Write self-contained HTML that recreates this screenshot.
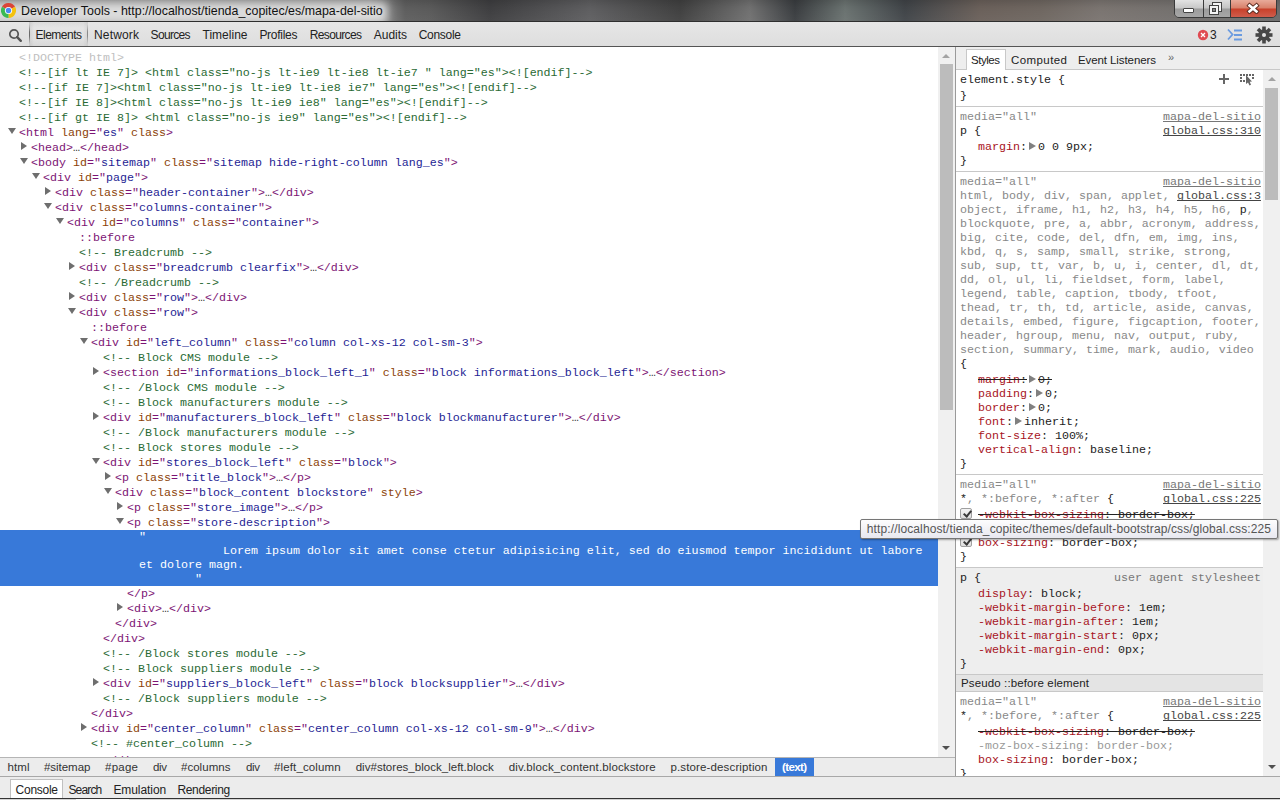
<!DOCTYPE html>
<html><head><meta charset="utf-8"><style>
*{margin:0;padding:0;box-sizing:border-box}
html,body{width:1280px;height:800px;overflow:hidden;background:#fff}
body{position:relative;font-family:"Liberation Sans",sans-serif;font-size:12px;color:#222}
.abs{position:absolute}
.ln{position:absolute;white-space:pre;font-family:"Liberation Mono",monospace;font-size:11.67px;line-height:15px;height:15px}
i.ad{position:absolute;width:0;height:0;border-left:4px solid transparent;border-right:4px solid transparent;border-top:6px solid #6e6e6e}
i.ar{position:absolute;width:0;height:0;border-top:4px solid transparent;border-bottom:4px solid transparent;border-left:6px solid #6e6e6e}
.sl{position:absolute;white-space:pre;font-family:"Liberation Mono",monospace;font-size:11.67px;line-height:14px;height:14px}
.ui{position:absolute;white-space:pre;font-family:"Liberation Sans",sans-serif;font-size:12px;line-height:14px;height:14px}
.tri{display:inline-block;width:0;height:0;border-top:4px solid transparent;border-bottom:4px solid transparent;border-left:7px solid #808080;margin:0 2px 0 2px;vertical-align:0px}
i.cb{position:absolute;width:12px;height:11px;border:1px solid #a0a0a0;border-radius:2px;background:linear-gradient(#f4f4f4,#dedede)}
i.cb:after{content:"";position:absolute;left:4px;top:0px;width:3px;height:6px;border:solid #3a3a3a;border-width:0 2px 2px 0;transform:rotate(40deg)}
</style></head><body>
<!-- title bar -->
<div class="abs" style="left:0;top:0;width:1280px;height:21px;background:linear-gradient(90deg,#9a9a9a 0px,#9a9a9a 370px,#5e5e5e 405px,#5a5a5a 430px,#3e3e40 490px,#5e5e60 590px,#404040 680px,#707070 750px,#3a3d40 795px,#6a7270 845px,#404448 905px,#6a605a 980px,#6e6660 1040px,#7a7470 1100px,#6a6a6a 1280px)"></div><div class="abs" style="left:0;top:0;width:1280px;height:21px;background:linear-gradient(rgba(0,0,0,.12),rgba(0,0,0,0) 8px,rgba(255,255,255,.04) 20px)"></div>
<div class="abs" style="left:0;top:21px;width:1280px;height:1px;background:#3a3a3a"></div>
<div class="abs" style="left:-10px;top:3px;width:397px;height:20px;background:#dcdcdc;filter:blur(4px)"></div><div class="abs" style="left:0;top:21px;width:1280px;height:1px;background:#2e2e2e"></div>
<svg class="abs" style="left:1px;top:3px" width="15" height="15" viewBox="-7.5 -7.5 15 15"><path d="M0 0 L-6.5 -3.75 A7.5 7.5 0 0 1 6.5 -3.75 Z" fill="#db4437"/><path d="M0 0 L6.5 -3.75 A7.5 7.5 0 0 1 0 7.5 Z" fill="#f4c20d"/><path d="M0 0 L0 7.5 A7.5 7.5 0 0 1 -6.5 -3.75 Z" fill="#3cba54"/><circle r="3.6" fill="#fff"/><circle r="2.7" fill="#4a8af4"/></svg>
<!-- window buttons -->
<div class="abs" style="left:1174px;top:-2px;width:103px;height:20px;border:1px solid #3a3a3a;border-radius:0 0 5px 5px;overflow:hidden">
 <div class="abs" style="left:0;top:0;width:28px;height:19px;background:linear-gradient(#e6e6e6 0,#c8c8c8 9px,#9c9c9c 10px,#a8a8a8 19px)"></div>
 <div class="abs" style="left:28px;top:0;width:1px;height:19px;background:#3a3a3a"></div>
 <div class="abs" style="left:29px;top:0;width:26px;height:19px;background:linear-gradient(#e0e0e0 0,#c4c4c4 9px,#9c9c9c 10px,#a8a8a8 19px)"></div>
 <div class="abs" style="left:55px;top:0;width:1px;height:19px;background:#3a3a3a"></div>
 <div class="abs" style="left:56px;top:0;width:47px;height:19px;background:linear-gradient(#eab0a0 0,#d8806a 9px,#c8402a 10px,#d06050 19px)"></div>
</div>
<div class="abs" style="left:1183px;top:8px;width:11px;height:5px;background:#fff;border:1px solid #444;border-radius:1px"></div>
<div class="abs" style="left:1212px;top:2px;width:10px;height:10px;border:1px solid #444;background:#f4f4f4"></div>
<div class="abs" style="left:1209px;top:5px;width:10px;height:10px;border:1px solid #444;background:#f4f4f4"></div>
<div class="abs" style="left:1212px;top:8px;width:4px;height:4px;border:1px solid #444;background:#888"></div>
<svg class="abs" style="left:1245px;top:2px" width="16" height="12" viewBox="0 0 16 12"><path d="M4.5 3.5 L11.5 9.5 M11.5 3.5 L4.5 9.5" stroke="#5a2a20" stroke-width="4.4" stroke-linecap="square"/><path d="M4.5 3.5 L11.5 9.5 M11.5 3.5 L4.5 9.5" stroke="#fff" stroke-width="2.6" stroke-linecap="square"/></svg>
<!-- toolbar -->
<div class="abs" style="left:0;top:22px;width:1280px;height:24px;background:linear-gradient(#e6e6e6,#dedede)"></div>
<div class="abs" style="left:29px;top:22px;width:59px;height:24px;background:linear-gradient(90deg,rgba(0,0,0,.08) 0,rgba(0,0,0,0) 5px,rgba(0,0,0,0) 54px,rgba(0,0,0,.06) 59px),linear-gradient(rgba(0,0,0,.05),rgba(0,0,0,0) 6px,rgba(0,0,0,0) 18px,rgba(0,0,0,.03))"></div>
<div class="abs" style="left:29px;top:24px;width:1px;height:20px;background:linear-gradient(rgba(90,90,90,0),#6a6a6a 40%,#6a6a6a 60%,rgba(90,90,90,0))"></div>
<div class="abs" style="left:87px;top:24px;width:1px;height:20px;background:linear-gradient(rgba(90,90,90,0),#8a8a8a 40%,#8a8a8a 60%,rgba(90,90,90,0))"></div>
<div class="abs" style="left:0;top:46px;width:1280px;height:1px;background:#555"></div>
<svg class="abs" style="left:8px;top:28px" width="16" height="15" viewBox="0 0 16 15"><circle cx="6" cy="6" r="4.2" fill="none" stroke="#555" stroke-width="1.7"/><path d="M9.2 9.2 L12.8 12.8" stroke="#555" stroke-width="2.4" stroke-linecap="round"/></svg>
<svg class="abs" style="left:1196px;top:28px" width="14" height="14" viewBox="0 0 14 14"><circle cx="7" cy="7" r="5.2" fill="#e04a52"/><path d="M5 5 L9 9 M9 5 L5 9" stroke="#fff" stroke-width="1.3"/></svg>
<svg class="abs" style="left:1226px;top:28px" width="18" height="14" viewBox="0 0 18 14"><path d="M2 1.5 L6.5 6.5 L2 11.5" fill="none" stroke="#6a9be0" stroke-width="1.8"/><rect x="8" y="1.5" width="8" height="2" fill="#6a9be0"/><rect x="8" y="6" width="8" height="2" fill="#6a9be0"/><rect x="8" y="10.5" width="8" height="2" fill="#6a9be0"/></svg>
<svg class="abs" style="left:1255px;top:26px" width="18" height="18" viewBox="0 0 18 18"><g fill="#474747" transform="translate(9 9)"><circle r="5.8"/><rect x="-1.8" y="-8.5" width="3.6" height="17"/><rect x="-1.8" y="-8.5" width="3.6" height="17" transform="rotate(45)"/><rect x="-1.8" y="-8.5" width="3.6" height="17" transform="rotate(90)"/><rect x="-1.8" y="-8.5" width="3.6" height="17" transform="rotate(135)"/></g><circle cx="9" cy="9" r="2" fill="#e4e4e4"/></svg>
<!-- elements tree -->
<div class="ln" style="left:19px;top:51px"><span style="color:#c0c0c0">&lt;!DOCTYPE html&gt;</span></div>
<div class="ln" style="left:19px;top:66px"><span style="color:#2a6a34">&lt;!--[if lt IE 7]&gt; &lt;html class="no-js lt-ie9 lt-ie8 lt-ie7 " lang="es"&gt;&lt;![endif]--&gt;</span></div>
<div class="ln" style="left:19px;top:81px"><span style="color:#2a6a34">&lt;!--[if IE 7]&gt;&lt;html class="no-js lt-ie9 lt-ie8 ie7" lang="es"&gt;&lt;![endif]--&gt;</span></div>
<div class="ln" style="left:19px;top:96px"><span style="color:#2a6a34">&lt;!--[if IE 8]&gt;&lt;html class="no-js lt-ie9 ie8" lang="es"&gt;&lt;![endif]--&gt;</span></div>
<div class="ln" style="left:19px;top:111px"><span style="color:#2a6a34">&lt;!--[if gt IE 8]&gt; &lt;html class="no-js ie9" lang="es"&gt;&lt;![endif]--&gt;</span></div>
<i class="ad" style="left:8px;top:128px"></i><div class="ln" style="left:19px;top:126px"><span style="color:#7c1474">&lt;html <span style="color:#8c4208">lang</span>="<span style="color:#1e1e94">es</span>" <span style="color:#8c4208">class</span>&gt;</span></div>
<i class="ar" style="left:21px;top:142px"></i><div class="ln" style="left:31px;top:141px"><span style="color:#7c1474">&lt;head&gt;</span><span style="color:#333">…</span><span style="color:#7c1474">&lt;/head&gt;</span></div>
<i class="ad" style="left:20px;top:158px"></i><div class="ln" style="left:31px;top:156px"><span style="color:#7c1474">&lt;body <span style="color:#8c4208">id</span>="<span style="color:#1e1e94">sitemap</span>" <span style="color:#8c4208">class</span>="<span style="color:#1e1e94">sitemap hide-right-column lang_es</span>"&gt;</span></div>
<i class="ad" style="left:32px;top:173px"></i><div class="ln" style="left:43px;top:171px"><span style="color:#7c1474">&lt;div <span style="color:#8c4208">id</span>="<span style="color:#1e1e94">page</span>"&gt;</span></div>
<i class="ar" style="left:45px;top:187px"></i><div class="ln" style="left:55px;top:186px"><span style="color:#7c1474">&lt;div <span style="color:#8c4208">class</span>="<span style="color:#1e1e94">header-container</span>"&gt;</span><span style="color:#333">…</span><span style="color:#7c1474">&lt;/div&gt;</span></div>
<i class="ad" style="left:44px;top:203px"></i><div class="ln" style="left:55px;top:201px"><span style="color:#7c1474">&lt;div <span style="color:#8c4208">class</span>="<span style="color:#1e1e94">columns-container</span>"&gt;</span></div>
<i class="ad" style="left:56px;top:218px"></i><div class="ln" style="left:67px;top:216px"><span style="color:#7c1474">&lt;div <span style="color:#8c4208">id</span>="<span style="color:#1e1e94">columns</span>" <span style="color:#8c4208">class</span>="<span style="color:#1e1e94">container</span>"&gt;</span></div>
<div class="ln" style="left:79px;top:231px"><span style="color:#7c1474">::before</span></div>
<div class="ln" style="left:79px;top:246px"><span style="color:#2a6a34">&lt;!-- Breadcrumb --&gt;</span></div>
<i class="ar" style="left:69px;top:262px"></i><div class="ln" style="left:79px;top:261px"><span style="color:#7c1474">&lt;div <span style="color:#8c4208">class</span>="<span style="color:#1e1e94">breadcrumb clearfix</span>"&gt;</span><span style="color:#333">…</span><span style="color:#7c1474">&lt;/div&gt;</span></div>
<div class="ln" style="left:79px;top:276px"><span style="color:#2a6a34">&lt;!-- /Breadcrumb --&gt;</span></div>
<i class="ar" style="left:69px;top:292px"></i><div class="ln" style="left:79px;top:291px"><span style="color:#7c1474">&lt;div <span style="color:#8c4208">class</span>="<span style="color:#1e1e94">row</span>"&gt;</span><span style="color:#333">…</span><span style="color:#7c1474">&lt;/div&gt;</span></div>
<i class="ad" style="left:68px;top:308px"></i><div class="ln" style="left:79px;top:306px"><span style="color:#7c1474">&lt;div <span style="color:#8c4208">class</span>="<span style="color:#1e1e94">row</span>"&gt;</span></div>
<div class="ln" style="left:91px;top:321px"><span style="color:#7c1474">::before</span></div>
<i class="ad" style="left:80px;top:338px"></i><div class="ln" style="left:91px;top:336px"><span style="color:#7c1474">&lt;div <span style="color:#8c4208">id</span>="<span style="color:#1e1e94">left_column</span>" <span style="color:#8c4208">class</span>="<span style="color:#1e1e94">column col-xs-12 col-sm-3</span>"&gt;</span></div>
<div class="ln" style="left:103px;top:351px"><span style="color:#2a6a34">&lt;!-- Block CMS module --&gt;</span></div>
<i class="ar" style="left:93px;top:367px"></i><div class="ln" style="left:103px;top:366px"><span style="color:#7c1474">&lt;section <span style="color:#8c4208">id</span>="<span style="color:#1e1e94">informations_block_left_1</span>" <span style="color:#8c4208">class</span>="<span style="color:#1e1e94">block informations_block_left</span>"&gt;</span><span style="color:#333">…</span><span style="color:#7c1474">&lt;/section&gt;</span></div>
<div class="ln" style="left:103px;top:381px"><span style="color:#2a6a34">&lt;!-- /Block CMS module --&gt;</span></div>
<div class="ln" style="left:103px;top:396px"><span style="color:#2a6a34">&lt;!-- Block manufacturers module --&gt;</span></div>
<i class="ar" style="left:93px;top:412px"></i><div class="ln" style="left:103px;top:411px"><span style="color:#7c1474">&lt;div <span style="color:#8c4208">id</span>="<span style="color:#1e1e94">manufacturers_block_left</span>" <span style="color:#8c4208">class</span>="<span style="color:#1e1e94">block blockmanufacturer</span>"&gt;</span><span style="color:#333">…</span><span style="color:#7c1474">&lt;/div&gt;</span></div>
<div class="ln" style="left:103px;top:426px"><span style="color:#2a6a34">&lt;!-- /Block manufacturers module --&gt;</span></div>
<div class="ln" style="left:103px;top:441px"><span style="color:#2a6a34">&lt;!-- Block stores module --&gt;</span></div>
<i class="ad" style="left:92px;top:458px"></i><div class="ln" style="left:103px;top:456px"><span style="color:#7c1474">&lt;div <span style="color:#8c4208">id</span>="<span style="color:#1e1e94">stores_block_left</span>" <span style="color:#8c4208">class</span>="<span style="color:#1e1e94">block</span>"&gt;</span></div>
<i class="ar" style="left:105px;top:472px"></i><div class="ln" style="left:115px;top:471px"><span style="color:#7c1474">&lt;p <span style="color:#8c4208">class</span>="<span style="color:#1e1e94">title_block</span>"&gt;</span><span style="color:#333">…</span><span style="color:#7c1474">&lt;/p&gt;</span></div>
<i class="ad" style="left:104px;top:488px"></i><div class="ln" style="left:115px;top:486px"><span style="color:#7c1474">&lt;div <span style="color:#8c4208">class</span>="<span style="color:#1e1e94">block_content blockstore</span>" <span style="color:#8c4208">style</span>&gt;</span></div>
<i class="ar" style="left:117px;top:502px"></i><div class="ln" style="left:127px;top:501px"><span style="color:#7c1474">&lt;p <span style="color:#8c4208">class</span>="<span style="color:#1e1e94">store_image</span>"&gt;</span><span style="color:#333">…</span><span style="color:#7c1474">&lt;/p&gt;</span></div>
<i class="ad" style="left:116px;top:518px"></i><div class="ln" style="left:127px;top:516px"><span style="color:#7c1474">&lt;p <span style="color:#8c4208">class</span>="<span style="color:#1e1e94">store-description</span>"&gt;</span></div>
<div class="ln" style="left:127px;top:587px"><span style="color:#7c1474">&lt;/p&gt;</span></div>
<i class="ar" style="left:117px;top:603px"></i><div class="ln" style="left:127px;top:602px"><span style="color:#7c1474">&lt;div&gt;</span><span style="color:#333">…</span><span style="color:#7c1474">&lt;/div&gt;</span></div>
<div class="ln" style="left:115px;top:617px"><span style="color:#7c1474">&lt;/div&gt;</span></div>
<div class="ln" style="left:103px;top:632px"><span style="color:#7c1474">&lt;/div&gt;</span></div>
<div class="ln" style="left:103px;top:647px"><span style="color:#2a6a34">&lt;!-- /Block stores module --&gt;</span></div>
<div class="ln" style="left:103px;top:662px"><span style="color:#2a6a34">&lt;!-- Block suppliers module --&gt;</span></div>
<i class="ar" style="left:93px;top:678px"></i><div class="ln" style="left:103px;top:677px"><span style="color:#7c1474">&lt;div <span style="color:#8c4208">id</span>="<span style="color:#1e1e94">suppliers_block_left</span>" <span style="color:#8c4208">class</span>="<span style="color:#1e1e94">block blocksupplier</span>"&gt;</span><span style="color:#333">…</span><span style="color:#7c1474">&lt;/div&gt;</span></div>
<div class="ln" style="left:103px;top:692px"><span style="color:#2a6a34">&lt;!-- /Block suppliers module --&gt;</span></div>
<div class="ln" style="left:91px;top:707px"><span style="color:#7c1474">&lt;/div&gt;</span></div>
<i class="ar" style="left:81px;top:723px"></i><div class="ln" style="left:91px;top:722px"><span style="color:#7c1474">&lt;div <span style="color:#8c4208">id</span>="<span style="color:#1e1e94">center_column</span>" <span style="color:#8c4208">class</span>="<span style="color:#1e1e94">center_column col-xs-12 col-sm-9</span>"&gt;</span><span style="color:#333">…</span><span style="color:#7c1474">&lt;/div&gt;</span></div>
<div class="ln" style="left:91px;top:737px"><span style="color:#2a6a34">&lt;!-- #center_column --&gt;</span></div>
<div class="abs" style="left:0;top:755px;width:938px;height:2px;overflow:hidden"><div class="ln" style="left:103px;top:-1px;color:#881280">&lt;/div&gt;</div></div>
<div class="abs" style="left:0;top:530px;width:938px;height:56px;background:#3879d9"></div>
<div class="ln" style="left:139px;top:530px;color:#fff;line-height:14px;height:14px">"</div>
<div class="ln" style="left:139px;top:544px;color:#fff;line-height:14px;height:14px">            Lorem ipsum dolor sit amet conse ctetur adipisicing elit, sed do eiusmod tempor incididunt ut labore</div>
<div class="ln" style="left:139px;top:558px;color:#fff;line-height:14px;height:14px">et dolore magn.</div>
<div class="ln" style="left:139px;top:572px;color:#fff;line-height:14px;height:14px">        "</div>
<!-- elements scrollbar -->
<div class="abs" style="left:938px;top:47px;width:17px;height:710px;background:#f0f0f0"></div>
<div class="abs" style="left:940px;top:64px;width:13px;height:346px;background:#bcbcbc"></div>
<i class="abs" style="left:942px;top:54px;width:0;height:0;border-left:4px solid transparent;border-right:4px solid transparent;border-bottom:4px solid #a3a3a3"></i>
<i class="abs" style="left:942px;top:746px;width:0;height:0;border-left:4px solid transparent;border-right:4px solid transparent;border-top:4px solid #505050"></i>
<!-- breadcrumb bar -->
<div class="abs" style="left:0;top:757px;width:955px;height:19px;background:#ececec;border-top:1px solid #b5b5b5"></div>
<div class="abs" style="left:775px;top:758px;width:39px;height:18px;background:#3879d9"></div>
<!-- sidebar -->
<div class="abs" style="left:955px;top:47px;width:1px;height:729px;background:#9a9a9a"></div>
<div class="abs" style="left:956px;top:47px;width:324px;height:23px;background:#eeeeee;border-bottom:1px solid #c8c8c8"></div>
<div class="abs" style="left:966px;top:49px;width:40px;height:21px;background:#fff;border:1px solid #c8c8c8;border-bottom:none"></div>
<div class="abs" style="left:1168px;top:51px;font:11px 'Liberation Sans';color:#666">&#187;</div>
<div class="abs" style="left:956px;top:106px;width:307px;height:1px;background:#c8c8c8"></div>
<div class="abs" style="left:956px;top:171px;width:307px;height:1px;background:#c8c8c8"></div>
<div class="abs" style="left:956px;top:474px;width:307px;height:1px;background:#c8c8c8"></div>
<div class="abs" style="left:956px;top:567px;width:307px;height:107px;background:#eeeeee;border-top:1px solid #c8c8c8"></div>
<div class="abs" style="left:956px;top:674px;width:307px;height:18px;background:#e4e4e4;border-top:1px solid #c8c8c8;border-bottom:1px solid #c8c8c8"></div>
<!-- sidebar icons -->
<div class="abs" style="left:1219px;top:78px;width:10px;height:2px;background:#666"></div>
<div class="abs" style="left:1223px;top:74px;width:2px;height:10px;background:#666"></div>
<svg class="abs" style="left:1240px;top:74px" width="14" height="12" viewBox="0 0 14 12"><g fill="#666"><rect x="0" y="0" width="2" height="2"/><rect x="3" y="0" width="2" height="2"/><rect x="6" y="0" width="2" height="2"/><rect x="9" y="0" width="2" height="2"/><rect x="12" y="0" width="2" height="2"/><rect x="0" y="3" width="2" height="2"/><rect x="12" y="3" width="2" height="2"/><rect x="0" y="6" width="2" height="2"/><rect x="3" y="6" width="2" height="2"/><path d="M6 1 L6 10 L8 8.5 L9.5 11.5 L11 10.8 L9.7 7.8 L12 7.5 Z"/></g></svg>
<div class="sl" style="left:960px;top:73px;"><span style="color:#222;">element.style {</span></div>
<div class="sl" style="left:960px;top:89px;"><span style="color:#222;">}</span></div>
<div class="sl" style="left:960px;top:110px;"><span style="color:#888;">media="all"</span></div>
<div class="sl" style="left:1163px;top:110px;color:#777;text-decoration:underline;text-decoration-skip-ink:none">mapa-del-sitio</div>
<div class="sl" style="left:960px;top:124px;"><span style="color:#222;">p {</span></div>
<div class="sl" style="left:1163px;top:124px;color:#444;text-decoration:underline;text-decoration-skip-ink:none">global.css:310</div>
<div class="sl" style="left:978px;top:140px;"><span style="color:#a8141e;">margin</span><span style="color:#222;">:</span><span class="tri"></span><span style="color:#222;">0 0 9px;</span></div>
<div class="sl" style="left:960px;top:154px;"><span style="color:#222;">}</span></div>
<div class="sl" style="left:960px;top:175px;"><span style="color:#888;">media="all"</span></div>
<div class="sl" style="left:1163px;top:175px;color:#777;text-decoration:underline;text-decoration-skip-ink:none">mapa-del-sitio</div>
<div class="sl" style="left:960px;top:189px;"><span style="color:#888;">html, body, div, span, applet, </span></div>
<div class="sl" style="left:960px;top:203px;"><span style="color:#888;">object, iframe, h1, h2, h3, h4, h5, h6, </span><span style="color:#222;">p</span><span style="color:#888;">,</span></div>
<div class="sl" style="left:960px;top:217px;"><span style="color:#888;">blockquote, pre, a, abbr, acronym, address,</span></div>
<div class="sl" style="left:960px;top:231px;"><span style="color:#888;">big, cite, code, del, dfn, em, img, ins,</span></div>
<div class="sl" style="left:960px;top:245px;"><span style="color:#888;">kbd, q, s, samp, small, strike, strong,</span></div>
<div class="sl" style="left:960px;top:259px;"><span style="color:#888;">sub, sup, tt, var, b, u, i, center, dl, dt,</span></div>
<div class="sl" style="left:960px;top:273px;"><span style="color:#888;">dd, ol, ul, li, fieldset, form, label,</span></div>
<div class="sl" style="left:960px;top:287px;"><span style="color:#888;">legend, table, caption, tbody, tfoot,</span></div>
<div class="sl" style="left:960px;top:301px;"><span style="color:#888;">thead, tr, th, td, article, aside, canvas,</span></div>
<div class="sl" style="left:960px;top:315px;"><span style="color:#888;">details, embed, figure, figcaption, footer,</span></div>
<div class="sl" style="left:960px;top:329px;"><span style="color:#888;">header, hgroup, menu, nav, output, ruby,</span></div>
<div class="sl" style="left:960px;top:343px;"><span style="color:#888;">section, summary, time, mark, audio, video</span></div>
<div class="sl" style="left:960px;top:357px;"><span style="color:#222;">{</span></div>
<div class="sl" style="left:1177px;top:189px;color:#444;text-decoration:underline;text-decoration-skip-ink:none">global.css:3</div>
<div class="sl" style="left:978px;top:373px;text-decoration:line-through;text-decoration-color:#222;"><span style="color:#a8141e;">margin</span><span style="color:#222;">:</span><span class="tri"></span><span style="color:#222;">0;</span></div>
<div class="sl" style="left:978px;top:387px;"><span style="color:#a8141e;">padding</span><span style="color:#222;">:</span><span class="tri"></span><span style="color:#222;">0;</span></div>
<div class="sl" style="left:978px;top:401px;"><span style="color:#a8141e;">border</span><span style="color:#222;">:</span><span class="tri"></span><span style="color:#222;">0;</span></div>
<div class="sl" style="left:978px;top:415px;"><span style="color:#a8141e;">font</span><span style="color:#222;">:</span><span class="tri"></span><span style="color:#222;">inherit;</span></div>
<div class="sl" style="left:978px;top:429px;"><span style="color:#a8141e;">font-size</span><span style="color:#222;">: </span><span style="color:#222;">100%;</span></div>
<div class="sl" style="left:978px;top:443px;"><span style="color:#a8141e;">vertical-align</span><span style="color:#222;">: </span><span style="color:#222;">baseline;</span></div>
<div class="sl" style="left:960px;top:457px;"><span style="color:#222;">}</span></div>
<div class="sl" style="left:960px;top:478px;"><span style="color:#888;">media="all"</span></div>
<div class="sl" style="left:1163px;top:478px;color:#777;text-decoration:underline;text-decoration-skip-ink:none">mapa-del-sitio</div>
<div class="sl" style="left:960px;top:492px;"><span style="color:#222;">*</span><span style="color:#888;">, *:before, *:after </span><span style="color:#222;">{</span></div>
<div class="sl" style="left:1163px;top:492px;color:#444;text-decoration:underline;text-decoration-skip-ink:none">global.css:225</div>
<div class="sl" style="left:978px;top:508px;text-decoration:line-through;text-decoration-color:#222;"><span style="color:#a8141e;">-webkit-box-sizing</span><span style="color:#222;">: </span><span style="color:#222;">border-box;</span></div>
<div class="sl" style="left:978px;top:522px;"><span style="color:#999;">-moz-box-sizing</span><span style="color:#999;">: </span><span style="color:#999;">border-box;</span></div>
<div class="sl" style="left:978px;top:536px;"><span style="color:#a8141e;">box-sizing</span><span style="color:#222;">: </span><span style="color:#222;">border-box;</span></div>
<i class="cb" style="left:960px;top:508px"></i>
<i class="cb" style="left:960px;top:536px"></i>
<div class="sl" style="left:960px;top:550px;"><span style="color:#222;">}</span></div>
<div class="sl" style="left:960px;top:571px;"><span style="color:#222;">p {</span></div>
<div class="sl" style="left:1114px;top:571px;color:#777">user agent stylesheet</div>
<div class="sl" style="left:978px;top:587px;"><span style="color:#a8141e;">display</span><span style="color:#222;">: </span><span style="color:#222;">block;</span></div>
<div class="sl" style="left:978px;top:601px;"><span style="color:#a8141e;">-webkit-margin-before</span><span style="color:#222;">: </span><span style="color:#222;">1em;</span></div>
<div class="sl" style="left:978px;top:615px;"><span style="color:#a8141e;">-webkit-margin-after</span><span style="color:#222;">: </span><span style="color:#222;">1em;</span></div>
<div class="sl" style="left:978px;top:629px;"><span style="color:#a8141e;">-webkit-margin-start</span><span style="color:#222;">: </span><span style="color:#222;">0px;</span></div>
<div class="sl" style="left:978px;top:643px;"><span style="color:#a8141e;">-webkit-margin-end</span><span style="color:#222;">: </span><span style="color:#222;">0px;</span></div>
<div class="sl" style="left:960px;top:657px;"><span style="color:#222;">}</span></div>
<div class="sl" style="left:960px;top:695px;"><span style="color:#888;">media="all"</span></div>
<div class="sl" style="left:1163px;top:695px;color:#777;text-decoration:underline;text-decoration-skip-ink:none">mapa-del-sitio</div>
<div class="sl" style="left:960px;top:709px;"><span style="color:#222;">*</span><span style="color:#888;">, *:before, *:after </span><span style="color:#222;">{</span></div>
<div class="sl" style="left:1163px;top:709px;color:#444;text-decoration:underline;text-decoration-skip-ink:none">global.css:225</div>
<div class="sl" style="left:978px;top:725px;text-decoration:line-through;text-decoration-color:#222;"><span style="color:#a8141e;">-webkit-box-sizing</span><span style="color:#222;">: </span><span style="color:#222;">border-box;</span></div>
<div class="sl" style="left:978px;top:739px;"><span style="color:#999;">-moz-box-sizing</span><span style="color:#999;">: </span><span style="color:#999;">border-box;</span></div>
<div class="sl" style="left:978px;top:753px;"><span style="color:#a8141e;">box-sizing</span><span style="color:#222;">: </span><span style="color:#222;">border-box;</span></div>
<div class="sl" style="left:960px;top:767px;"><span style="color:#222;">}</span></div>
<!-- sidebar scrollbar -->
<div class="abs" style="left:1263px;top:70px;width:17px;height:706px;background:#f0f0f0"></div>
<div class="abs" style="left:1265px;top:88px;width:13px;height:112px;background:#bcbcbc"></div>
<i class="abs" style="left:1268px;top:77px;width:0;height:0;border-left:4px solid transparent;border-right:4px solid transparent;border-bottom:4px solid #a3a3a3"></i>
<i class="abs" style="left:1268px;top:765px;width:0;height:0;border-left:4px solid transparent;border-right:4px solid transparent;border-top:4px solid #505050"></i>
<!-- drawer -->
<div class="abs" style="left:0;top:776px;width:1280px;height:22px;background:#ececec;border-top:1px solid #a8a8a8"></div>
<div class="abs" style="left:10px;top:779px;width:53px;height:19px;background:#fff;border:1px solid #c0c0c0;border-bottom:none"></div>
<div class="abs" style="left:0;top:798px;width:1280px;height:1px;background:#333"></div>
<div class="abs" style="left:0;top:799px;width:1280px;height:1px;background:#d4d4d4"></div>
<div class="abs" style="left:76px;top:799px;width:53px;height:1px;background:#fafafa"></div>
<!-- tooltip -->
<div class="abs" style="left:860px;top:519px;width:418px;height:20px;background:linear-gradient(#fdfdfd,#e8e8f0);border:1px solid #767676;border-radius:2px;box-shadow:1px 1px 2px rgba(0,0,0,.35)"></div>
<div class="ui" style="left:21.00px;top:4px;font-size:12.40px;letter-spacing:0.016px;color:#111;">Developer Tools - http://localhost/tienda_copitec/es/mapa-del-sitio</div>
<div class="ui" style="left:35.50px;top:28px;font-size:12.00px;letter-spacing:-0.500px;color:#222;">Elements</div>
<div class="ui" style="left:94.00px;top:28px;font-size:12.00px;letter-spacing:0.158px;color:#222;">Network</div>
<div class="ui" style="left:150.60px;top:28px;font-size:12.00px;letter-spacing:-0.667px;color:#222;">Sources</div>
<div class="ui" style="left:202.50px;top:28px;font-size:12.00px;letter-spacing:0.014px;color:#222;">Timeline</div>
<div class="ui" style="left:259.40px;top:28px;font-size:12.00px;letter-spacing:-0.271px;color:#222;">Profiles</div>
<div class="ui" style="left:309.75px;top:28px;font-size:12.00px;letter-spacing:-0.638px;color:#222;">Resources</div>
<div class="ui" style="left:373.75px;top:28px;font-size:12.00px;letter-spacing:-0.020px;color:#222;">Audits</div>
<div class="ui" style="left:418.75px;top:28px;font-size:12.00px;letter-spacing:-0.300px;color:#222;">Console</div>
<div class="ui" style="left:1210.00px;top:28px;font-size:12.00px;letter-spacing:0.000px;color:#222;">3</div>
<div class="ui" style="left:971.00px;top:53px;font-size:11.50px;letter-spacing:-0.467px;color:#222;">Styles</div>
<div class="ui" style="left:1011.00px;top:53px;font-size:11.50px;letter-spacing:0.422px;color:#222;">Computed</div>
<div class="ui" style="left:1078.00px;top:53px;font-size:11.50px;letter-spacing:-0.090px;color:#222;">Event Listeners</div>
<div class="ui" style="left:961.00px;top:676px;font-size:11.50px;letter-spacing:0.123px;color:#222;">Pseudo ::before element</div>
<div class="ui" style="left:7.50px;top:760px;font-size:11.50px;letter-spacing:0.131px;color:#333;">html</div>
<div class="ui" style="left:44.00px;top:760px;font-size:11.50px;letter-spacing:-0.039px;color:#333;">#sitemap</div>
<div class="ui" style="left:105.00px;top:760px;font-size:11.50px;letter-spacing:0.260px;color:#333;">#page</div>
<div class="ui" style="left:153.00px;top:760px;font-size:11.50px;letter-spacing:-0.355px;color:#333;">div</div>
<div class="ui" style="left:181.00px;top:760px;font-size:11.50px;letter-spacing:0.027px;color:#333;">#columns</div>
<div class="ui" style="left:246.00px;top:760px;font-size:11.50px;letter-spacing:-0.355px;color:#333;">div</div>
<div class="ui" style="left:274.00px;top:760px;font-size:11.50px;letter-spacing:0.135px;color:#333;">#left_column</div>
<div class="ui" style="left:355.70px;top:760px;font-size:11.50px;letter-spacing:0.024px;color:#333;">div#stores_block_left.block</div>
<div class="ui" style="left:508.80px;top:760px;font-size:11.50px;letter-spacing:0.122px;color:#333;">div.block_content.blockstore</div>
<div class="ui" style="left:670.50px;top:760px;font-size:11.50px;letter-spacing:0.134px;color:#333;">p.store-description</div>
<div class="ui" style="left:782.00px;top:760px;font-size:11.50px;letter-spacing:-0.625px;color:#fff;font-weight:bold;">(text)</div>
<div class="ui" style="left:15.60px;top:783px;font-size:12.00px;letter-spacing:-0.275px;color:#222;">Console</div>
<div class="ui" style="left:68.40px;top:783px;font-size:12.00px;letter-spacing:-0.840px;color:#222;">Search</div>
<div class="ui" style="left:113.40px;top:783px;font-size:12.00px;letter-spacing:-0.069px;color:#222;">Emulation</div>
<div class="ui" style="left:177.40px;top:783px;font-size:12.00px;letter-spacing:-0.319px;color:#222;">Rendering</div>
<div class="ui" style="left:866.80px;top:522px;font-size:12.00px;letter-spacing:0.116px;color:#555;">http://localhost/tienda_copitec/themes/default-bootstrap/css/global.css:225</div>
</body></html>
